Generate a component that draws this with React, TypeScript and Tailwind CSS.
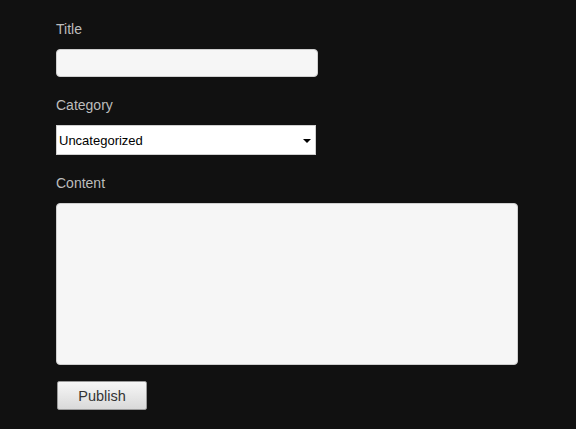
export default function App() {
  return (
    <div className="min-h-screen w-full bg-[#111111] pl-[56px] pt-[19px] font-['Liberation_Sans',Arial,sans-serif]">
      <form className="flex flex-col" onSubmit={(e) => e.preventDefault()}>
        <label className="text-[14px] leading-[20px] text-[#bdbdbd]">Title</label>
        <input
          type="text"
          className="mt-[10px] h-[28px] w-[262px] rounded-[4px] border border-[#cfcfcf] bg-[#f6f6f6] px-2 text-[13px] outline-none"
        />

        <label className="mt-[18px] text-[14px] leading-[20px] text-[#bdbdbd]">Category</label>
        <div className="relative mt-[10px] h-[30px] w-[260px]">
          <select className="h-full w-full appearance-none rounded-none border border-[#d0d0d0] bg-white pl-[2px] pt-[2px] text-[13px] text-black outline-none">
            <option>Uncategorized</option>
          </select>
          <svg
            className="pointer-events-none absolute right-[5px] top-[14px]"
            width="8"
            height="4"
            viewBox="0 0 8 4"
          >
            <path d="M0 0h8L4 4z" fill="#000" />
          </svg>
        </div>

        <label className="mt-[18px] text-[14px] leading-[20px] text-[#bdbdbd]">Content</label>
        <textarea className="mt-[10px] h-[162px] w-[462px] resize-none rounded-[4px] border border-[#cfcfcf] bg-[#f6f6f6] p-2 text-[13px] outline-none" />

        <div className="mt-[16px] pl-px">
          <button
            type="submit"
            className="h-[29px] w-[90px] rounded-[2px] border border-[#9a9a9a] bg-gradient-to-b from-[#f7f7f7] to-[#d9d9d9] pt-[2px] text-[14.5px] text-[#333333]"
          >
            Publish
          </button>
        </div>
      </form>
    </div>
  );
}
